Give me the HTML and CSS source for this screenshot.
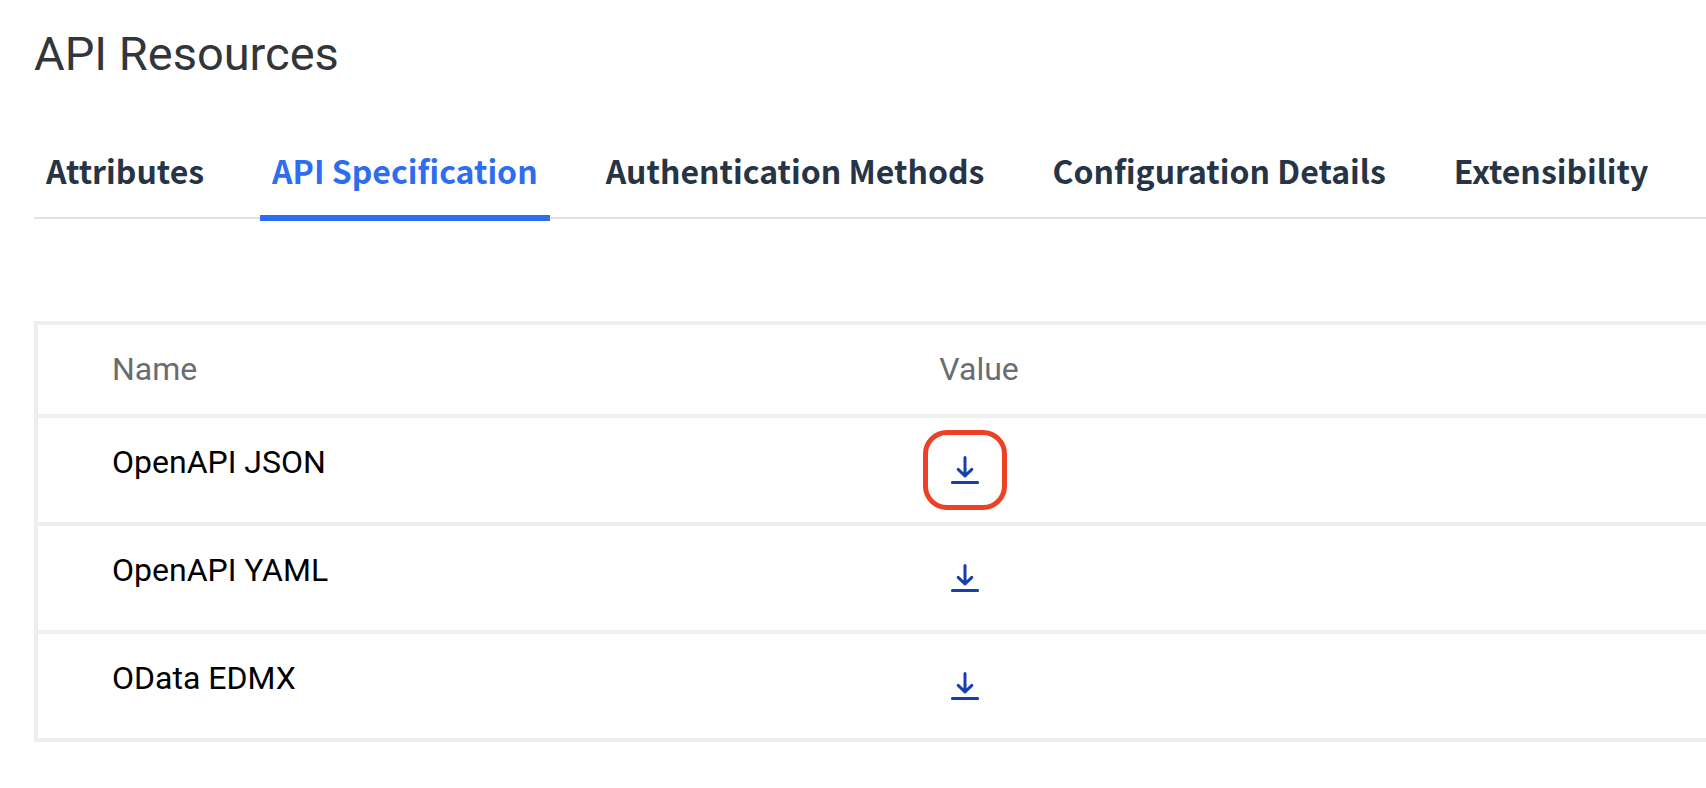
FILE: index.html
```html
<!DOCTYPE html>
<html lang="en">
<head>
  <meta charset="utf-8">
  <meta name="viewport" content="width=device-width, initial-scale=1">
  <title>API Resources</title>
  <link rel="stylesheet" href="styles.css">
</head>
<body>
  <svg class="symbols" aria-hidden="true">
    <symbol id="download" viewBox="0 0 32 32">
      <path d="M16 3.5V21M9.2 15.4L16 22L22.8 15.4M3.4 28.5H28.6"/>
    </symbol>
  </svg>
  <main class="page">
    <h1 class="title">API Resources</h1>
    <nav class="tabs" aria-label="API resource sections">
      <a class="tab" href="#attributes">Attributes</a>
      <a class="tab tab-active" href="#specification" aria-current="page">API Specification</a>
      <a class="tab" href="#authentication">Authentication Methods</a>
      <a class="tab" href="#configuration">Configuration Details</a>
      <a class="tab" href="#extensibility">Extensibility</a>
    </nav>
    <table class="specs">
      <thead>
        <tr><th class="name" scope="col">Name</th><th class="value" scope="col">Value</th></tr>
      </thead>
      <tbody>
        <tr>
          <td class="name">OpenAPI JSON</td>
          <td class="value"><button class="download download-marked" type="button" aria-label="Download OpenAPI JSON"><svg class="icon"><use href="#download"/></svg></button></td>
        </tr>
        <tr>
          <td class="name">OpenAPI YAML</td>
          <td class="value"><button class="download" type="button" aria-label="Download OpenAPI YAML"><svg class="icon"><use href="#download"/></svg></button></td>
        </tr>
        <tr>
          <td class="name">OData EDMX</td>
          <td class="value"><button class="download" type="button" aria-label="Download OData EDMX"><svg class="icon"><use href="#download"/></svg></button></td>
        </tr>
      </tbody>
    </table>
  </main>
</body>
</html>
```
FILE: styles.css
```css
* {
  box-sizing: border-box;
}

body {
  margin: 0;
  background: #fff;
  color: #000;
  font-family: Roboto, "Open Sans", sans-serif;
  font-size: 32px;
  line-height: 40px;
}

.symbols {
  display: none;
}

.page {
  padding: 24px 0 44px 34px;
}

.title {
  margin: 0;
  color: #32363a;
  font-size: 47px;
  font-weight: 400;
  line-height: 60px;
}

.tabs {
  display: flex;
  gap: 44px;
  margin: 52px 0 102px;
  box-shadow: inset 0 -2px #e1e1e1;
  white-space: nowrap;
}

.tab {
  height: 83px;
  padding: 14px 12px 0;
  color: #263445;
  font-family: "Noto Sans CJK SC", "Open Sans", sans-serif;
  font-weight: 700;
  line-height: 40px;
  text-decoration: none;
}

.tab-active {
  height: 85px;
  margin-bottom: -2px;
  border-bottom: 6px solid #2e6df0;
  color: #2e6df0;
}

.specs {
  width: 100%;
  border: 4px solid #eee;
  border-width: 4px 0 0 4px;
  border-spacing: 0;
}

.specs th,
.specs td {
  border-bottom: 4px solid #eee;
  font-weight: 400;
  text-align: left;
  vertical-align: top;
}

.specs th {
  padding: 24px 34px 25px;
  color: #6a6d70;
}

.specs td {
  padding: 12px 18px;
}

.specs .name {
  width: 52%;
  padding-top: 24px;
  padding-left: 74px;
}

.download {
  display: flex;
  align-items: center;
  justify-content: center;
  width: 84px;
  height: 80px;
  padding: 0;
  border: 5px solid transparent;
  border-radius: 24px;
  background: none;
  color: #153eae;
  cursor: pointer;
}

.download-marked {
  border-color: #ec4124;
}

.icon {
  width: 32px;
  height: 32px;
  fill: none;
  stroke: currentColor;
  stroke-width: 3;
  stroke-linecap: round;
  stroke-linejoin: round;
}
```
